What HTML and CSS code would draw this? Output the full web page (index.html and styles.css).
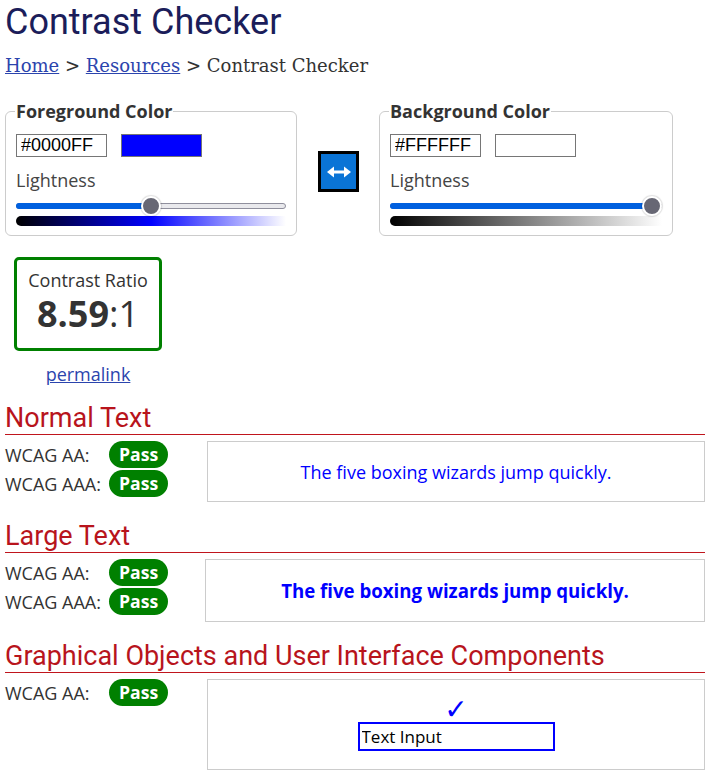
FILE: index.html
```html
<!DOCTYPE html>
<html lang="en">
<head>
<meta charset="utf-8">
<title>Contrast Checker</title>
<link rel="stylesheet" href="styles.css">
</head>
<body>
<main class="page">
  <h1 class="title">Contrast Checker</h1>
  <nav class="crumbs"><a href="#">Home</a> &gt; <a href="#">Resources</a> &gt; Contrast Checker</nav>

  <div class="pickers">
    <fieldset class="picker picker-fg">
      <legend>Foreground Color</legend>
      <div class="color-row">
        <input class="hex" type="text" value="#0000FF" aria-label="Foreground hex">
        <span class="swatch swatch-fg"></span>
      </div>
      <div class="lightness">Lightness</div>
      <div class="slider" style="--v: 0.5">
        <div class="track"><div class="fill"></div></div>
        <div class="thumb"></div>
      </div>
      <div class="gradient gradient-fg"></div>
    </fieldset>

    <button class="swap" type="button" aria-label="Swap colors">
      <svg width="24" height="12" viewBox="0 0 24 12" aria-hidden="true">
        <polygon points="0,6 7,0.5 7,11.5" fill="#fff"/>
        <polygon points="24,6 17,0.5 17,11.5" fill="#fff"/>
        <rect x="6" y="4.5" width="12" height="3" fill="#fff"/>
      </svg>
    </button>

    <fieldset class="picker picker-bg">
      <legend>Background Color</legend>
      <div class="color-row">
        <input class="hex" type="text" value="#FFFFFF" aria-label="Background hex">
        <span class="swatch swatch-bg"></span>
      </div>
      <div class="lightness">Lightness</div>
      <div class="slider" style="--v: 1">
        <div class="track"><div class="fill"></div></div>
        <div class="thumb"></div>
      </div>
      <div class="gradient gradient-bg"></div>
    </fieldset>
  </div>

  <div class="ratio">
    <div class="ratio-box">
      <div class="ratio-label">Contrast Ratio</div>
      <div class="ratio-value"><b>8.59</b>:1</div>
    </div>
    <a class="permalink" href="#">permalink</a>
  </div>

  <section class="result result-first">
    <h2 class="result-title">Normal Text</h2>
    <div class="result-body">
      <div class="checks">
        <div class="check"><span class="check-label">WCAG AA:</span><span class="badge">Pass</span></div>
        <div class="check"><span class="check-label">WCAG AAA:</span><span class="badge">Pass</span></div>
      </div>
      <div class="sample sample-normal">The five boxing wizards jump quickly.</div>
    </div>
  </section>

  <section class="result">
    <h2 class="result-title">Large Text</h2>
    <div class="result-body result-body-large">
      <div class="checks">
        <div class="check"><span class="check-label">WCAG AA:</span><span class="badge">Pass</span></div>
        <div class="check"><span class="check-label">WCAG AAA:</span><span class="badge">Pass</span></div>
      </div>
      <div class="sample sample-large">The five boxing wizards jump quickly.</div>
    </div>
  </section>

  <section class="result">
    <h2 class="result-title">Graphical Objects and User Interface Components</h2>
    <div class="result-body">
      <div class="checks">
        <div class="check"><span class="check-label">WCAG AA:</span><span class="badge">Pass</span></div>
      </div>
      <div class="sample sample-graphic">
        <span class="tick">&#10003;</span>
        <input class="demo-input" type="text" value="Text Input" aria-label="Text Input">
      </div>
    </div>
  </section>
</main>
</body>
</html>
```

FILE: styles.css
```css
html, body {
  margin: 0;
  background: #fff;
}

body {
  padding: 0 3px 0 5px;
  font-family: "Open Sans", "DejaVu Sans", sans-serif;
  font-size: 18px;
  color: #333;
}

.title {
  margin: 0;
  font-family: Roboto, "Liberation Sans", sans-serif;
  font-weight: 400;
  font-size: 36px;
  line-height: 44px;
  color: #1b1d5a;
}

.crumbs {
  margin-top: 10px;
  font-family: "DejaVu Serif", "Liberation Serif", serif;
  font-size: 18px;
  line-height: 24px;
  color: #333;
}

.crumbs a,
.permalink {
  color: #2b44ad;
}

/* pickers */
.pickers {
  display: flex;
  align-items: flex-start;
  margin-top: 21px;
}

.picker {
  margin: 0;
  min-width: 0;
  box-sizing: border-box;
  border: 1px solid #ccc;
  border-radius: 6px;
  padding: 11px 10px 9px 10px;
}

.picker-fg {
  width: 292px;
}

.picker-bg {
  width: 294px;
}

.picker legend {
  margin-left: -1px;
  padding: 0 1px;
  font-weight: 700;
  font-size: 18px;
  line-height: 24px;
  color: #333;
}

.color-row {
  display: flex;
  gap: 14px;
}

.hex {
  box-sizing: border-box;
  width: 91px;
  height: 23px;
  margin: 0;
  padding: 0 0 0 4px;
  border: 1px solid #767676;
  border-radius: 0;
  font-family: "Liberation Sans", Arial, sans-serif;
  font-size: 18px;
  color: #000;
  background: #fff;
}

.swatch {
  box-sizing: border-box;
  width: 81px;
  height: 23px;
  border: 1px solid #767676;
}

.swatch-fg { background: #0000ff; }
.swatch-bg { background: #ffffff; }

.lightness {
  margin-top: 11px;
  line-height: 24px;
  color: #444;
}

.slider {
  position: relative;
  height: 20px;
  margin-top: 4px;
  display: flex;
  align-items: center;
}

.track {
  flex: 1;
  box-sizing: border-box;
  height: 6px;
  border: 1px solid #8f8f9d;
  border-radius: 3px;
  background: #e9e9ed;
}

.fill {
  margin: -1px 0 0 -1px;
  height: 6px;
  width: calc(11px + (100% - 18px) * var(--v));
  border-radius: 3px 0 0 3px;
  background: #0060df;
}

.thumb {
  position: absolute;
  top: 0;
  left: calc((100% - 20px) * var(--v));
  box-sizing: border-box;
  width: 20px;
  height: 20px;
  border-radius: 50%;
  border: 2px solid #fff;
  background: #676774;
  box-shadow: 0 0 1px 1px rgba(0, 0, 0, 0.12);
}

.gradient {
  height: 10px;
  border-radius: 5px 0 0 5px;
}

.gradient-fg {
  background: linear-gradient(to right, #000 0%, #0000ff 50%, #fff 100%);
}

.gradient-bg {
  background: linear-gradient(to right, #000 0%, #fff 100%);
}

.swap {
  box-sizing: border-box;
  width: 41px;
  height: 41px;
  margin: 52px 20px 0 21px;
  padding: 0;
  border: 3px solid #000;
  background: #0a74d6;
  display: flex;
  align-items: center;
  justify-content: center;
  cursor: pointer;
}

/* ratio */
.ratio {
  width: 148px;
  margin: 21px 0 0 9px;
  text-align: center;
}

.ratio-box {
  box-sizing: border-box;
  height: 94px;
  padding: 8px 0 12px;
  border: 3px solid #008000;
  border-radius: 5px;
}

.ratio-label {
  line-height: 24px;
}

.ratio-value {
  font-size: 36px;
  line-height: 44px;
}

.ratio-value b {
  font-weight: 700;
}

.permalink {
  display: block;
  margin-top: 11px;
  line-height: 24px;
}

/* results */
.result {
  margin-top: 19px;
}

.result-first {
  margin-top: 17px;
}

.result-title {
  margin: 0;
  padding-bottom: 1px;
  border-bottom: 1px solid #c0151d;
  font-family: Roboto, "Liberation Sans", sans-serif;
  font-weight: 400;
  font-size: 27px;
  line-height: 30px;
  color: #b8141c;
}

.result-body {
  display: grid;
  grid-template-columns: 202px 1fr;
  align-items: start;
  margin-top: 6px;
}

.result-body-large {
  grid-template-columns: 200px 1fr;
}

.check {
  display: flex;
  align-items: center;
  height: 27px;
  margin-bottom: 2px;
}

.check-label {
  width: 104px;
}

.badge {
  height: 27px;
  line-height: 27px;
  padding: 0 10px;
  border-radius: 14px;
  background: #008000;
  color: #fff;
  font-weight: 700;
  font-size: 17.6px;
}

.sample {
  box-sizing: border-box;
  border: 1px solid #ccc;
  display: flex;
  align-items: center;
  justify-content: center;
  color: #0000ff;
}

.sample-normal {
  height: 61px;
}

.sample-large {
  height: 63px;
  font-weight: 700;
  font-size: 18.67px;
}

.sample-graphic {
  height: 91px;
  flex-direction: column;
}

.tick {
  font-family: "DejaVu Sans", sans-serif;
  font-size: 28px;
  line-height: 24px;
  color: #0000ff;
}

.demo-input {
  box-sizing: border-box;
  width: 197px;
  height: 29px;
  margin: 0;
  padding: 0 0 0 2px;
  border: 2px solid #0000ff;
  border-radius: 0;
  font-family: "Open Sans", sans-serif;
  font-size: 17px;
  color: #000;
  background: #fff;
}
```
